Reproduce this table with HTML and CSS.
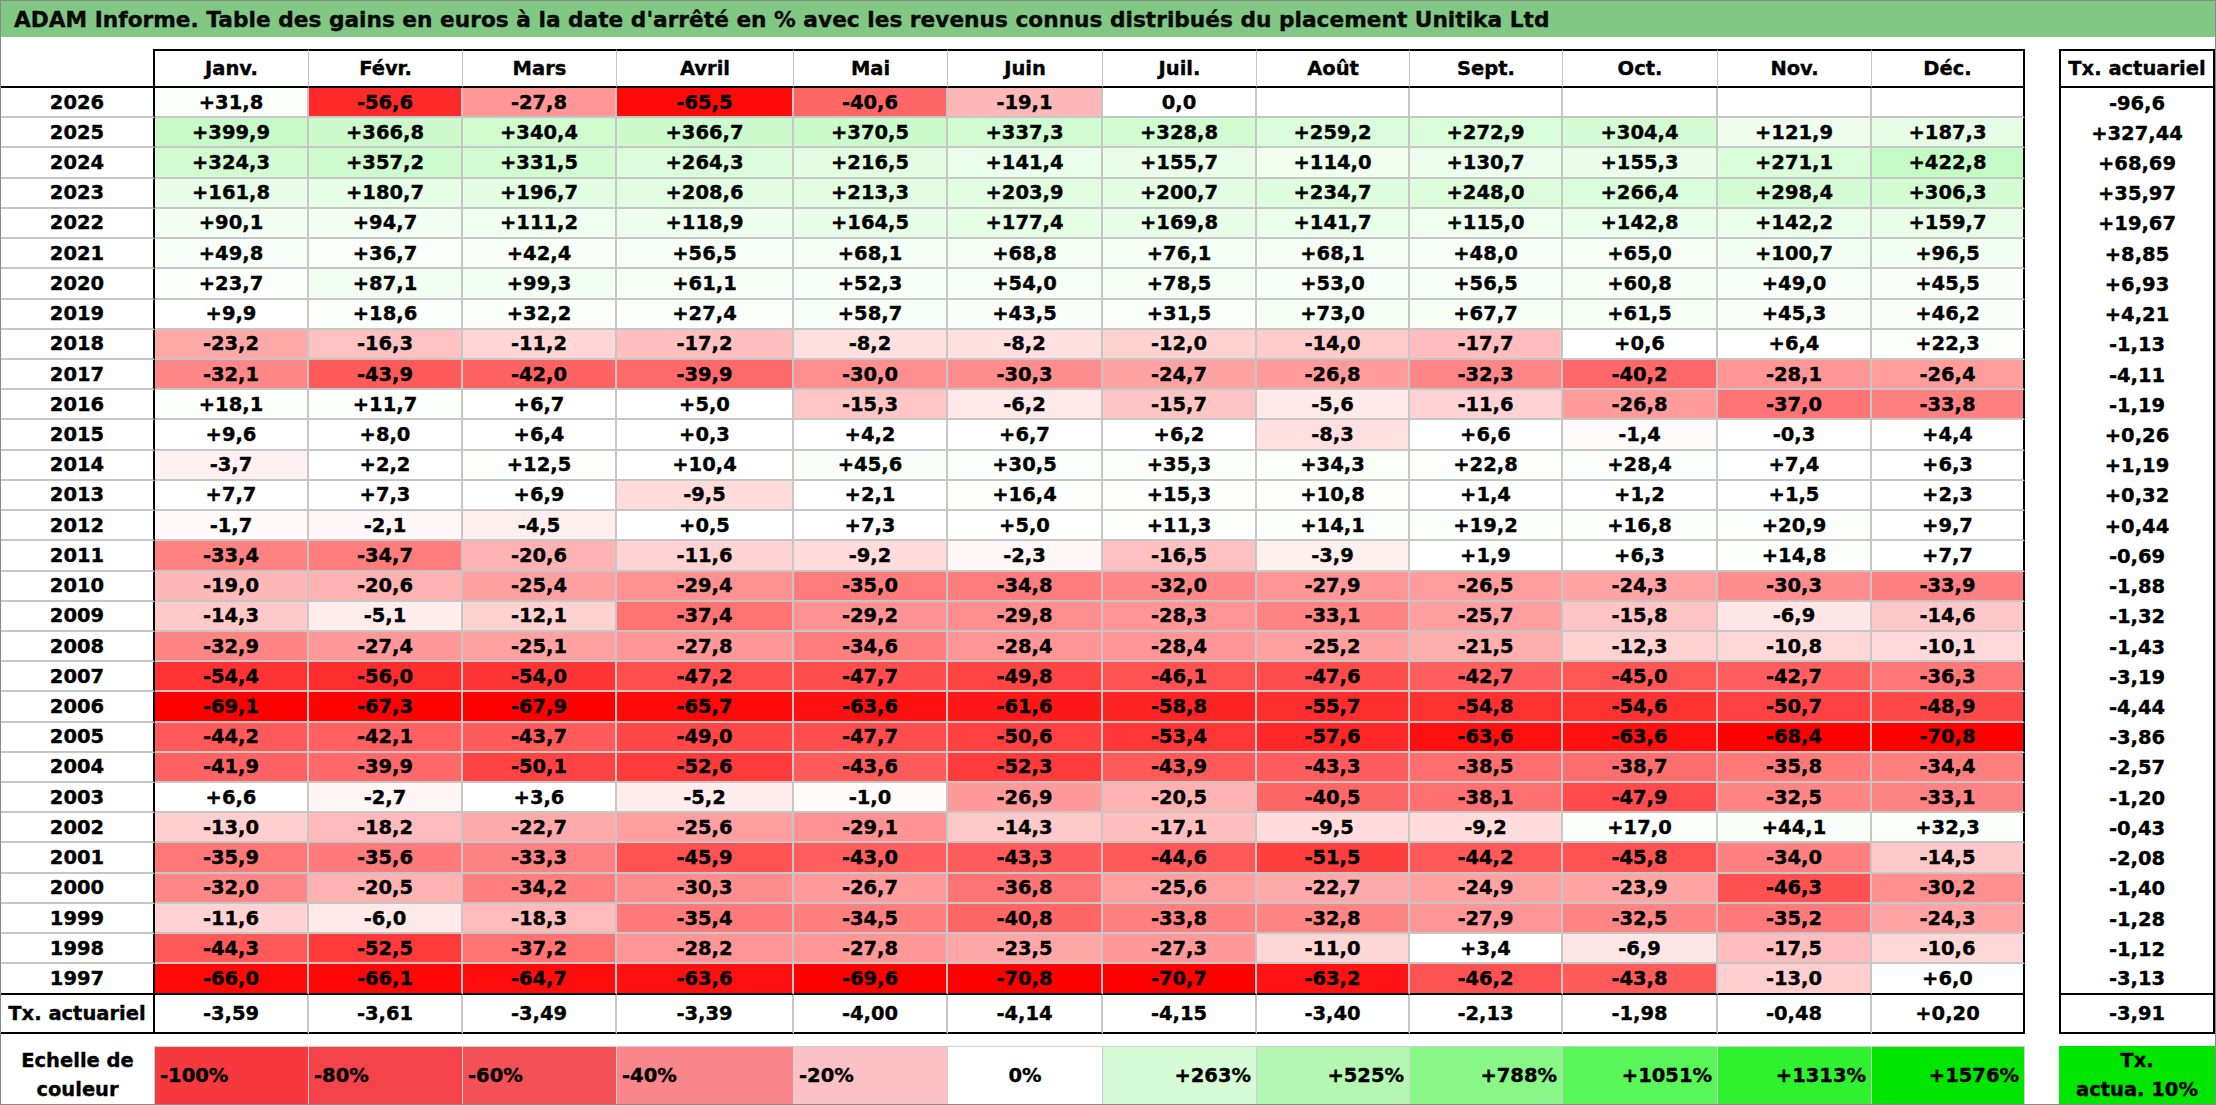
FILE: index.html
```html
<!DOCTYPE html>
<html lang="fr">
<head>
<meta charset="utf-8">
<title>ADAM Informe – Unitika Ltd</title>
<link rel="stylesheet" href="styles.css">
</head>
<body>
<div class="page">
  <h1 class="title">ADAM Informe. Table des gains en euros à la date d'arrêté en % avec les revenus connus distribués du placement Unitika Ltd</h1>
  <div class="sheet">
    <div class="main" id="main">
      <div class="cell head corner"></div>
      <div class="cell head">Janv.</div>
      <div class="cell head">Févr.</div>
      <div class="cell head">Mars</div>
      <div class="cell head">Avril</div>
      <div class="cell head">Mai</div>
      <div class="cell head">Juin</div>
      <div class="cell head">Juil.</div>
      <div class="cell head">Août</div>
      <div class="cell head">Sept.</div>
      <div class="cell head">Oct.</div>
      <div class="cell head">Nov.</div>
      <div class="cell head end">Déc.</div>
      <div class="spacer" id="main-spacer"></div>
      <div class="cell scale-label">Echelle de<br>couleur</div>
      <div class="cell scale s1 left">-100%</div>
      <div class="cell scale s2 left">-80%</div>
      <div class="cell scale s3 left">-60%</div>
      <div class="cell scale s4 left">-40%</div>
      <div class="cell scale s5 left">-20%</div>
      <div class="cell scale s6">0%</div>
      <div class="cell scale s7 right">+263%</div>
      <div class="cell scale s8 right">+525%</div>
      <div class="cell scale s9 right">+788%</div>
      <div class="cell scale s10 right">+1051%</div>
      <div class="cell scale s11 right">+1313%</div>
      <div class="cell scale s12 right">+1576%</div>
    </div>
    <div class="side" id="side">
      <div class="cell head side-head">Tx. actuariel</div>
      <div class="spacer" id="side-spacer"></div>
      <div class="cell scale-tx">Tx.<br>actua. 10%</div>
    </div>
  </div>
</div>
<script src="app.js"></script>
</body>
</html>
```

FILE: styles.css
```css
* { box-sizing: border-box; }
html, body { margin: 0; padding: 0; background: #ffffff; }
body {
  font-family: "DejaVu Sans", "Liberation Sans", sans-serif;
  font-weight: bold;
  color: #000000;
  -webkit-text-stroke: 0.35px #000000;
}
.page {
  width: 2216px;
  height: 1105px;
  border: 1px solid #8a8a8a;
  overflow: hidden;
}
.title {
  margin: 0;
  height: 36px;
  background: #80c883;
  font-size: 21.7px;
  line-height: 37px;
  padding-left: 13px;
  font-weight: bold;
  white-space: nowrap;
  color: #0a0a0a;
}
.sheet {
  display: flex;
  margin-top: 12px;
}
.main {
  display: grid;
  grid-template-columns: 154px 154px 154px 154px 177px 154px 155px 154px 153px 153px 155px 154px 153px;
  grid-template-rows: 39px repeat(30, 30.2333px) 39px 12px 58px;
}
.side {
  display: grid;
  margin-left: 34px;
  grid-template-columns: 156px;
  grid-template-rows: 39px repeat(30, 30.2333px) 39px 12px 58px;
}
.cell {
  display: flex;
  align-items: center;
  justify-content: center;
  font-size: 19.5px;
  white-space: nowrap;
}
.spacer { grid-column: 1 / -1; }

/* header */
.head {
  border-top: 2px solid #000;
  border-bottom: 2px solid #000;
  border-right: 1px solid #c4c4c4;
}
.head.corner { border-top: none; border-right: 2px solid #000; }
.head.end { border-right: 2px solid #000; }
.side-head { border-left: 2px solid #000; border-right: 2px solid #000; }

/* body rows */
.lbl {
  border-right: 2px solid #000;
  border-bottom: 2px solid #c6c6c6;
}
.val {
  border-right: 2px solid #c6c6c6;
  border-bottom: 2px solid #c6c6c6;
}
.val.end { border-right: 2px solid #000; }
.row-last { border-bottom: 2px solid #000; }
.total { border-bottom: 2px solid #000; background: #fff; }
.tx {
  border-left: 2px solid #000;
  border-right: 2px solid #000;
}
.tx.row-last, .tx.total { border-bottom: 2px solid #000; }

/* colour scale */
.scale-label {
  flex-direction: column;
  text-align: center;
  line-height: 29px;
  border-right: 1px solid #cfcfcf;
}
.scale {
  border-top: 1px solid #cfcfcf;
  border-right: 1px solid #cfcfcf;
}
.scale.left { justify-content: flex-start; padding-left: 5px; }
.scale.right { justify-content: flex-end; padding-right: 5px; }
.s1 { background: #f5393f; }
.s2 { background: #f5434a; }
.s3 { background: #f45157; }
.s4 { background: #f8868b; }
.s5 { background: #fcc1c4; }
.s6 { background: #ffffff; }
.s7 { background: #d6fcd6; }
.s8 { background: #b3f7b3; }
.s9 { background: #88f788; }
.s10 { background: #59f659; }
.s11 { background: #30f130; }
.s12 { background: #00e600; }
.scale-tx {
  background: #00e600;
  text-align: center;
  line-height: 29px;
  flex-direction: column;
}
```

FILE: app.js
```js
(function () {
  var rows = [
    ["2026", "+31,8 -56,6 -27,8 -65,5 -40,6 -19,1 0,0 _ _ _ _ _", "-96,6"],
    ["2025", "+399,9 +366,8 +340,4 +366,7 +370,5 +337,3 +328,8 +259,2 +272,9 +304,4 +121,9 +187,3", "+327,44"],
    ["2024", "+324,3 +357,2 +331,5 +264,3 +216,5 +141,4 +155,7 +114,0 +130,7 +155,3 +271,1 +422,8", "+68,69"],
    ["2023", "+161,8 +180,7 +196,7 +208,6 +213,3 +203,9 +200,7 +234,7 +248,0 +266,4 +298,4 +306,3", "+35,97"],
    ["2022", "+90,1 +94,7 +111,2 +118,9 +164,5 +177,4 +169,8 +141,7 +115,0 +142,8 +142,2 +159,7", "+19,67"],
    ["2021", "+49,8 +36,7 +42,4 +56,5 +68,1 +68,8 +76,1 +68,1 +48,0 +65,0 +100,7 +96,5", "+8,85"],
    ["2020", "+23,7 +87,1 +99,3 +61,1 +52,3 +54,0 +78,5 +53,0 +56,5 +60,8 +49,0 +45,5", "+6,93"],
    ["2019", "+9,9 +18,6 +32,2 +27,4 +58,7 +43,5 +31,5 +73,0 +67,7 +61,5 +45,3 +46,2", "+4,21"],
    ["2018", "-23,2 -16,3 -11,2 -17,2 -8,2 -8,2 -12,0 -14,0 -17,7 +0,6 +6,4 +22,3", "-1,13"],
    ["2017", "-32,1 -43,9 -42,0 -39,9 -30,0 -30,3 -24,7 -26,8 -32,3 -40,2 -28,1 -26,4", "-4,11"],
    ["2016", "+18,1 +11,7 +6,7 +5,0 -15,3 -6,2 -15,7 -5,6 -11,6 -26,8 -37,0 -33,8", "-1,19"],
    ["2015", "+9,6 +8,0 +6,4 +0,3 +4,2 +6,7 +6,2 -8,3 +6,6 -1,4 -0,3 +4,4", "+0,26"],
    ["2014", "-3,7 +2,2 +12,5 +10,4 +45,6 +30,5 +35,3 +34,3 +22,8 +28,4 +7,4 +6,3", "+1,19"],
    ["2013", "+7,7 +7,3 +6,9 -9,5 +2,1 +16,4 +15,3 +10,8 +1,4 +1,2 +1,5 +2,3", "+0,32"],
    ["2012", "-1,7 -2,1 -4,5 +0,5 +7,3 +5,0 +11,3 +14,1 +19,2 +16,8 +20,9 +9,7", "+0,44"],
    ["2011", "-33,4 -34,7 -20,6 -11,6 -9,2 -2,3 -16,5 -3,9 +1,9 +6,3 +14,8 +7,7", "-0,69"],
    ["2010", "-19,0 -20,6 -25,4 -29,4 -35,0 -34,8 -32,0 -27,9 -26,5 -24,3 -30,3 -33,9", "-1,88"],
    ["2009", "-14,3 -5,1 -12,1 -37,4 -29,2 -29,8 -28,3 -33,1 -25,7 -15,8 -6,9 -14,6", "-1,32"],
    ["2008", "-32,9 -27,4 -25,1 -27,8 -34,6 -28,4 -28,4 -25,2 -21,5 -12,3 -10,8 -10,1", "-1,43"],
    ["2007", "-54,4 -56,0 -54,0 -47,2 -47,7 -49,8 -46,1 -47,6 -42,7 -45,0 -42,7 -36,3", "-3,19"],
    ["2006", "-69,1 -67,3 -67,9 -65,7 -63,6 -61,6 -58,8 -55,7 -54,8 -54,6 -50,7 -48,9", "-4,44"],
    ["2005", "-44,2 -42,1 -43,7 -49,0 -47,7 -50,6 -53,4 -57,6 -63,6 -63,6 -68,4 -70,8", "-3,86"],
    ["2004", "-41,9 -39,9 -50,1 -52,6 -43,6 -52,3 -43,9 -43,3 -38,5 -38,7 -35,8 -34,4", "-2,57"],
    ["2003", "+6,6 -2,7 +3,6 -5,2 -1,0 -26,9 -20,5 -40,5 -38,1 -47,9 -32,5 -33,1", "-1,20"],
    ["2002", "-13,0 -18,2 -22,7 -25,6 -29,1 -14,3 -17,1 -9,5 -9,2 +17,0 +44,1 +32,3", "-0,43"],
    ["2001", "-35,9 -35,6 -33,3 -45,9 -43,0 -43,3 -44,6 -51,5 -44,2 -45,8 -34,0 -14,5", "-2,08"],
    ["2000", "-32,0 -20,5 -34,2 -30,3 -26,7 -36,8 -25,6 -22,7 -24,9 -23,9 -46,3 -30,2", "-1,40"],
    ["1999", "-11,6 -6,0 -18,3 -35,4 -34,5 -40,8 -33,8 -32,8 -27,9 -32,5 -35,2 -24,3", "-1,28"],
    ["1998", "-44,3 -52,5 -37,2 -28,2 -27,8 -23,5 -27,3 -11,0 +3,4 -6,9 -17,5 -10,6", "-1,12"],
    ["1997", "-66,0 -66,1 -64,7 -63,6 -69,6 -70,8 -70,7 -63,2 -46,2 -43,8 -13,0 +6,0", "-3,13"]
  ];
  var totals = "-3,59 -3,61 -3,49 -3,39 -4,00 -4,14 -4,15 -3,40 -2,13 -1,98 -0,48 +0,20".split(" ");
  var totalTx = "-3,91";

  function colour(s) {
    var v = parseFloat(s.replace(",", "."));
    if (isNaN(v) || v === 0) return "#ffffff";
    if (v < 0) {
      var t = Math.min(1, -v / 68);
      var g = Math.round(255 * (1 - t));
      return "rgb(255," + g + "," + g + ")";
    }
    var r = Math.max(0, Math.round(255 - 0.14 * v));
    var gg = Math.round(255 - 0.0125 * v);
    return "rgb(" + r + "," + gg + "," + r + ")";
  }

  function cell(cls, text) {
    var d = document.createElement("div");
    d.className = "cell " + cls;
    d.textContent = text;
    return d;
  }

  var main = document.getElementById("main");
  var mainSpacer = document.getElementById("main-spacer");
  var side = document.getElementById("side");
  var sideSpacer = document.getElementById("side-spacer");

  rows.forEach(function (row, i) {
    var last = i === rows.length - 1 ? " row-last" : "";
    main.insertBefore(cell("lbl" + last, row[0]), mainSpacer);
    row[1].split(" ").forEach(function (s, j) {
      var txt = s === "_" ? "" : s;
      var c = cell("val" + (j === 11 ? " end" : "") + last, txt);
      c.style.backgroundColor = colour(txt);
      main.insertBefore(c, mainSpacer);
    });
    side.insertBefore(cell("tx" + last, row[2]), sideSpacer);
  });

  main.insertBefore(cell("lbl total", "Tx. actuariel"), mainSpacer);
  totals.forEach(function (s, j) {
    main.insertBefore(cell("val total" + (j === 11 ? " end" : ""), s), mainSpacer);
  });
  side.insertBefore(cell("tx total", totalTx), sideSpacer);
})();
```
